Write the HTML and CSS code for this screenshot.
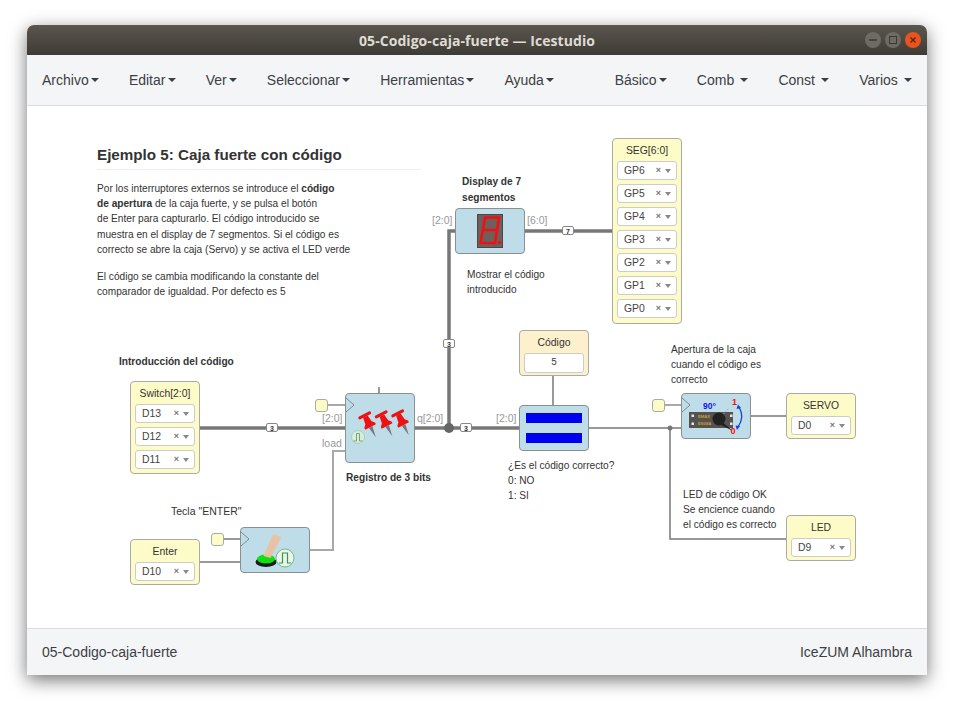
FILE: index.html
```html
<!DOCTYPE html>
<html lang="es">
<head>
    <meta charset="UTF-8">
    <meta name="viewport" content="width=device-width, initial-scale=1.0">
    <title>05-Codigo-caja-fuerte - Icestudio</title>
    <link rel="stylesheet" href="styles.css">
</head>
<body>
<div class="window">

    <header class="titlebar">
        <span class="title">05-Codigo-caja-fuerte — Icestudio</span>
        <div class="win-btns">
            <span class="win-btn"><svg viewBox="0 0 16 16"><path d="M4 8h8" stroke="#3a3833" stroke-width="1.5"/></svg></span>
            <span class="win-btn"><svg viewBox="0 0 16 16"><rect x="4.5" y="4.5" width="7" height="7" fill="none" stroke="#3a3833"/></svg></span>
            <span class="win-btn close"><svg viewBox="0 0 16 16"><path d="M5.5 5.5l5 5M10.5 5.5l-5 5" stroke="#5a2410" stroke-width="1.3"/></svg></span>
        </div>
    </header>

    <nav class="menubar">
        <a class="menu-item">Archivo<i class="caret"></i></a>
        <a class="menu-item">Editar<i class="caret"></i></a>
        <a class="menu-item">Ver<i class="caret"></i></a>
        <a class="menu-item">Seleccionar<i class="caret"></i></a>
        <a class="menu-item">Herramientas<i class="caret"></i></a>
        <a class="menu-item">Ayuda<i class="caret"></i></a>
        <a class="menu-item push">Básico<i class="caret"></i></a>
        <a class="menu-item">Comb<i class="caret wide"></i></a>
        <a class="menu-item">Const<i class="caret wide"></i></a>
        <a class="menu-item">Varios<i class="caret wide"></i></a>
    </nav>

    <main class="canvas">

        <!-- wires, drawn in window coordinates -->
        <svg class="wires" viewBox="27 106 900 522">
            <g class="bus">
                <path d="M200 428H345"/>
                <path d="M415 428H519"/>
                <path d="M449 428V231H455"/>
                <path d="M525 231H612"/>
            </g>
            <circle cx="449" cy="428" r="5" fill="#666"/>
            <g class="wire">
                <path d="M553 376V405"/>
                <path d="M589 428H681"/>
                <path d="M670 428V539H786"/>
                <path d="M751 416H786"/>
                <path d="M200 562H240"/>
                <path d="M379 387V393"/>
                <path d="M223 539H240"/>
            </g>
            <circle cx="670" cy="428" r="2.5" fill="#777"/>
            <g class="wire-light">
                <path d="M327 405H345"/>
                <path d="M664 405H681"/>
                <path d="M310 550H333V451H345"/>
            </g>
            <g class="bus-tag">
                <rect x="266.500" y="423.500" width="11" height="8" rx="1.500"/><text x="272" y="430.500">3</text>
                <rect x="443.500" y="339.500" width="11" height="8" rx="1.500"/><text x="449" y="346.500">3</text>
                <rect x="460.500" y="423.500" width="11" height="8" rx="1.500"/><text x="466" y="430.500">3</text>
                <rect x="562.500" y="226.500" width="11" height="8" rx="1.500"/><text x="568" y="233.500">7</text>
            </g>
        </svg>

        <!-- notes -->
        <section class="note intro">
            <h2>Ejemplo 5: Caja fuerte con código</h2>
            <p>Por los interruptores externos se introduce el <b>código<br>de apertura</b> de la caja fuerte, y se pulsa el botón<br>de Enter para capturarlo. El código introducido se<br>muestra en el display de 7 segmentos. Si el código es<br>correcto se abre la caja (Servo) y se activa el LED verde</p>
            <p>El código se cambia modificando la constante del<br>comparador de igualdad. Por defecto es 5</p>
        </section>
        <div class="note n-display"><b>Display de 7<br>segmentos</b></div>
        <div class="note n-show">Mostrar el código<br>introducido</div>
        <div class="note n-input"><b>Introducción del código</b></div>
        <div class="note n-reg"><b>Registro de 3 bits</b></div>
        <div class="note n-check">¿Es el código correcto?<br>0: NO<br>1: SI</div>
        <div class="note n-open">Apertura de la caja<br>cuando el código es<br>correcto</div>
        <div class="note n-led">LED de código OK<br>Se encience cuando<br>el código es correcto</div>
        <div class="note n-enter">Tecla "ENTER"</div>

        <!-- port labels -->
        <span class="port p1">[2:0]</span>
        <span class="port p2">load</span>
        <span class="port p3">q[2:0]</span>
        <span class="port p4">[2:0]</span>
        <span class="port p5">[2:0]</span>
        <span class="port p6">[6:0]</span>

        <!-- io blocks -->
        <div class="io b-switch">
            <div class="io-name">Switch[2:0]</div>
            <div class="pin"><span>D13</span><em>×</em><i></i></div>
            <div class="pin"><span>D12</span><em>×</em><i></i></div>
            <div class="pin"><span>D11</span><em>×</em><i></i></div>
        </div>
        <div class="io b-seg">
            <div class="io-name">SEG[6:0]</div>
            <div class="pin"><span>GP6</span><em>×</em><i></i></div>
            <div class="pin"><span>GP5</span><em>×</em><i></i></div>
            <div class="pin"><span>GP4</span><em>×</em><i></i></div>
            <div class="pin"><span>GP3</span><em>×</em><i></i></div>
            <div class="pin"><span>GP2</span><em>×</em><i></i></div>
            <div class="pin"><span>GP1</span><em>×</em><i></i></div>
            <div class="pin"><span>GP0</span><em>×</em><i></i></div>
        </div>
        <div class="io b-enter">
            <div class="io-name">Enter</div>
            <div class="pin"><span>D10</span><em>×</em><i></i></div>
        </div>
        <div class="io b-servo">
            <div class="io-name">SERVO</div>
            <div class="pin"><span>D0</span><em>×</em><i></i></div>
        </div>
        <div class="io b-led">
            <div class="io-name">LED</div>
            <div class="pin"><span>D9</span><em>×</em><i></i></div>
        </div>
        <div class="io constant b-code">
            <div class="io-name">Código</div>
            <div class="const-value">5</div>
        </div>

        <span class="tick t-reg"></span>
        <span class="tick t-servo"></span>
        <span class="tick t-btn"></span>

        <!-- logic blocks -->
        <div class="block b-display">
            <svg viewBox="0 0 68 44">
                <rect x="21.5" y="5.5" width="25" height="33" fill="#6f5f5c" stroke="#4d4644"/>
                <path d="M29 8.500H43L39 34H24.500zM26.700 21H41" fill="none" stroke="#ee1111" stroke-width="2.600"/>
                <circle cx="43.500" cy="33.500" r="1.800" fill="#ee1111"/>
            </svg>
        </div>

        <div class="block b-reg">
            <svg viewBox="0 0 68 68">
                <path d="M0 4L8 11L0 18" class="clk"/>
                <g id="tack" transform="translate(18 20) rotate(-27)">
                    <rect x="-7" y="0" width="14" height="3" rx="1.500" fill="#ee1111"/>
                    <path d="M-2.500 3H2.500L3.500 10L6 12.500V14.500H-6V12.500L-3.500 10z" fill="#ee1111"/>
                    <path d="M-2 14.500H2L0 26z" fill="#77777c"/>
                </g>
                <use href="#tack" transform="translate(16.500 -1)"/>
                <use href="#tack" transform="translate(33 -2)"/>
                <circle cx="12" cy="43" r="6.500" fill="#d8ecdc" stroke="#a9d2b2"/>
                <path d="M7.500 47H10.500V39.500H13.500V47H16.500" fill="none" stroke="#7a9e84"/>
            </svg>
        </div>

        <div class="block b-comp">
            <div class="eq-bar"></div>
            <div class="eq-bar"></div>
        </div>

        <div class="block b-servoctl">
            <svg viewBox="0 0 68 44">
                <path d="M0 4L8 11L0 18" class="clk"/>
                <rect x="7" y="18" width="44" height="16" fill="#55524f"/>
                <g fill="#e8e8e8">
                    <rect x="9.500" y="20.500" width="2.500" height="2.500"/>
                    <rect x="9.500" y="28.500" width="2.500" height="2.500"/>
                    <rect x="48" y="20.500" width="2.500" height="2.500"/>
                    <rect x="48" y="28.500" width="2.500" height="2.500"/>
                </g>
                <text class="servo-brand" x="16" y="24">EMAX</text>
                <text class="servo-brand" x="16" y="30.500">ES08A</text>
                <path d="M37 25L47 14" stroke="#aaa" stroke-width="1" stroke-dasharray="2 1"/>
                <circle cx="37" cy="25" r="6.500" fill="#222"/>
                <path d="M32 21L51 37L39 31z" fill="#222"/>
                <path d="M57 13Q63 23 56 33" fill="none" stroke="#1144dd" stroke-width="1.300"/>
                <path d="M54.500 15L56 10.500L59 14zM53.500 31.500L58 32L55 36z" fill="#1144dd"/>
                <text class="servo-deg" x="21" y="14.500">90°</text>
                <text class="servo-one" x="50" y="10.500">1</text>
                <text class="servo-one" x="48.500" y="39.500">0</text>
            </svg>
        </div>

        <div class="block b-button">
            <svg viewBox="0 0 68 44">
                <path d="M0 4L8 11L0 18" class="clk"/>
                <ellipse cx="25" cy="34" rx="10.500" ry="5" fill="#1a1a1a"/>
                <ellipse cx="25" cy="31" rx="9" ry="4.500" fill="#11dd11"/>
                <path d="M32 6L40.500 9L29.500 30L22.500 28z" fill="#e8c2a6"/>
                <circle cx="44" cy="30" r="9" fill="#eef3ee" stroke="#6cc080"/>
                <path d="M38 35H41.500V25H46.500V35H50" fill="none" stroke="#2f9a4a" stroke-width="1.200"/>
            </svg>
        </div>
    </main>

    <footer class="statusbar">
        <span>05-Codigo-caja-fuerte</span>
        <span>IceZUM Alhambra</span>
    </footer>
</div>
</body>
</html>
```

FILE: styles.css
```css
/* General */
html, body {
    height: 100%;
}

body {
    box-sizing: border-box;
    margin: 0;
    padding: 25px 0 0 27px;
    background: #fff;
    font-family: "Liberation Sans", Arial, sans-serif;
    color: #333;
}

.window {
    position: relative;
    display: flex;
    flex-direction: column;
    width: 900px;
    height: 650px;
    border-radius: 7px 7px 0 0;
    box-shadow: 0 5px 18px rgba(0, 0, 0, 0.55);
    background: #fff;
}

/* Title bar */
.titlebar {
    position: relative;
    display: flex;
    align-items: center;
    justify-content: center;
    height: 30px;
    border-radius: 7px 7px 0 0;
    background: linear-gradient(#5a564e, #3e3b36);
}

.title {
    font-family: "Open Sans", sans-serif;
    font-size: 14px;
    font-weight: 700;
    letter-spacing: 0.05px;
    color: #dfdbd2;
}

.win-btns {
    position: absolute;
    right: 6px;
    top: 7px;
    display: flex;
    gap: 4px;
}

.win-btn {
    width: 16px;
    height: 16px;
    border-radius: 50%;
    background: #6e6b63;
}

.win-btn svg {
    display: block;
}

.win-btn.close {
    background: #e8531e;
}

/* Menu */
.menubar {
    display: flex;
    align-items: center;
    height: 50px;
    background: #f4f5f7;
    border-bottom: 1px solid #d9dbe0;
    font-size: 14px;
}

.menu-item {
    display: flex;
    align-items: center;
    padding: 0 15px;
    color: #3c3f44;
}

.menu-item.push {
    margin-left: auto;
}

.caret {
    width: 0;
    height: 0;
    margin-left: 2.200px;
    border-top: 4px solid #3c3f44;
    border-left: 4px solid transparent;
    border-right: 4px solid transparent;
}

.caret.wide {
    margin-left: 6.200px;
}

/* Canvas */
.canvas {
    position: relative;
    flex: 1;
    overflow: hidden;
    background: #fff;
}

.wires {
    position: absolute;
    left: 0;
    top: 0;
    width: 900px;
    height: 522px;
}

.wires path {
    fill: none;
}

.bus {
    stroke: #777;
    stroke-width: 3.5;
}

.wire {
    stroke: #777;
    stroke-width: 1.5;
}

.wire-light {
    stroke: #a8a8a8;
    stroke-width: 2;
}

.bus-tag rect {
    fill: #fff;
    stroke: #888;
}

.bus-tag text {
    font-size: 7px;
    font-weight: 700;
    text-anchor: middle;
    fill: #333;
}

/* Notes */
.note {
    position: absolute;
    font-size: 10.150px;
    line-height: 15.200px;
    color: #333;
    white-space: nowrap;
}

.intro {
    left: 70px;
    top: 39px;
    width: 324px;
}

.intro h2 {
    margin: 0 0 11px;
    padding-bottom: 4px;
    border-bottom: 1px solid #eee;
    font-size: 15.200px;
    line-height: 20px;
    color: #333;
}

.intro p {
    margin: 0 0 12px;
}

.n-display { left: 435px; top: 68px; line-height: 16px; }
.n-show { left: 440px; top: 161px; }
.n-input { left: 92px; top: 248px; }
.n-reg { left: 319px; top: 364px; }
.n-check { left: 481px; top: 352px; }
.n-open { left: 644px; top: 236px; }
.n-led { left: 656px; top: 381px; }
.n-enter { left: 144px; top: 398px; font-size: 10.500px; }

/* Port labels */
.port {
    position: absolute;
    font-size: 10.500px;
    line-height: 12px;
    color: #999;
}

.p1 { left: 295px; top: 306px; }
.p2 { left: 295px; top: 331px; }
.p3 { left: 390px; top: 306px; }
.p4 { left: 469px; top: 306px; }
.p5 { left: 405px; top: 108px; }
.p6 { left: 500px; top: 108px; }

/* Input and output blocks */
.io {
    position: absolute;
    box-sizing: border-box;
    width: 70px;
    padding: 0 4px;
    background: #fdfcc8;
    border: 1px solid #aaa;
    border-radius: 4px;
}

.io-name {
    height: 21.500px;
    font-size: 10.400px;
    line-height: 23px;
    text-align: center;
    color: #333;
}

.pin {
    display: flex;
    align-items: center;
    box-sizing: border-box;
    height: 19px;
    margin-bottom: 4px;
    padding: 0 5px 0 6px;
    background: #fff;
    border: 1px solid #ccc;
    border-radius: 3px;
    font-size: 10.400px;
    color: #444;
}

.pin span {
    flex: 1;
}

.pin em {
    font-size: 9px;
    font-style: normal;
    font-weight: 700;
    color: #777;
}

.pin i {
    width: 0;
    height: 0;
    margin: 2px 0 0 4px;
    border-top: 4px solid #888;
    border-left: 3px solid transparent;
    border-right: 3px solid transparent;
}

.constant {
    background: #fdf0cc;
}

.const-value {
    box-sizing: border-box;
    height: 20px;
    background: #fff;
    border: 1px solid #ccc;
    border-radius: 3px;
    font-family: "Liberation Mono", monospace;
    font-size: 10px;
    line-height: 18px;
    text-align: center;
    color: #444;
}

.b-switch { left: 103px; top: 275px; height: 93px; }
.b-seg { left: 585px; top: 32px; height: 186px; }
.b-enter { left: 103px; top: 433px; height: 46px; }
.b-servo { left: 759px; top: 287px; height: 46px; }
.b-led { left: 759px; top: 409px; height: 46px; }
.b-code { left: 492px; top: 224px; height: 46px; }

.tick {
    position: absolute;
    box-sizing: border-box;
    width: 13px;
    height: 13px;
    background: #fdfcc8;
    border: 1px solid #aaa;
    border-radius: 3px;
}

.t-reg { left: 288px; top: 293px; }
.t-servo { left: 625px; top: 293px; }
.t-btn { left: 184px; top: 427px; }

/* Logic blocks */
.block {
    position: absolute;
    box-sizing: border-box;
    width: 70px;
    height: 46px;
    background: #bfdde9;
    border: 1px solid #8a8f92;
    border-radius: 4px;
}

.block svg {
    display: block;
    width: 100%;
    height: 100%;
    overflow: visible;
}

.clk {
    fill: #bfdde9;
    stroke: #888;
    stroke-width: 1;
}

.b-display { left: 428px; top: 102px; }
.b-reg { left: 318px; top: 287px; height: 70px; }
.b-servoctl { left: 654px; top: 287px; }
.b-button { left: 213px; top: 421px; }

.b-comp {
    left: 492px;
    top: 299px;
    display: flex;
    flex-direction: column;
    align-items: center;
    justify-content: center;
    gap: 10px;
}

.eq-bar {
    width: 56px;
    height: 10px;
    background: #0000f0;
}

.servo-brand {
    font-size: 4.200px;
    font-weight: 700;
    fill: #c8a030;
}

.servo-deg {
    font-size: 8.500px;
    font-weight: 700;
    fill: #1111ee;
}

.servo-one {
    font-size: 9px;
    font-weight: 700;
    fill: #ee1111;
}

/* Status bar */
.statusbar {
    display: flex;
    align-items: center;
    justify-content: space-between;
    height: 46px;
    padding: 0 15px;
    background: #f4f5f7;
    border-top: 1px solid #d9dbe0;
    font-size: 14px;
    color: #3c3f44;
}
```
